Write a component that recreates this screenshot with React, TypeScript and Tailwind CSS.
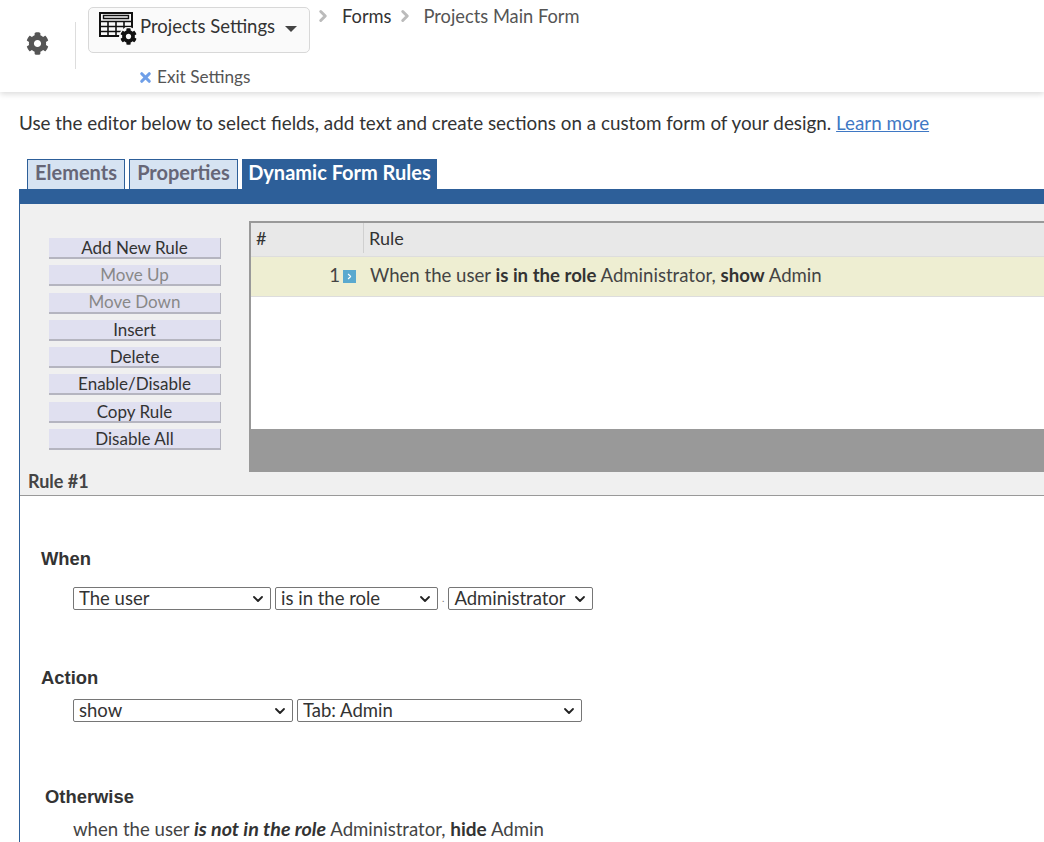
import { ChevronDown, ChevronRight, X } from "lucide-react";
import { FaCog } from "react-icons/fa";

const ruleButtons = [
  { label: "Add New Rule", disabled: false },
  { label: "Move Up", disabled: true },
  { label: "Move Down", disabled: true },
  { label: "Insert", disabled: false },
  { label: "Delete", disabled: false },
  { label: "Enable/Disable", disabled: false },
  { label: "Copy Rule", disabled: false },
  { label: "Disable All", disabled: false },
];

function Pick({ value, width }: { value: string; width: string }) {
  return (
    <div className={`relative h-[23px] ${width}`}>
      <select
        defaultValue={value}
        className="h-full w-full appearance-none rounded-[2px] border border-[#767676] bg-white pb-[2px] pl-[5px] text-[18.5px] leading-[20px] text-[#333]"
      >
        <option>{value}</option>
      </select>
      <ChevronDown
        size={16}
        stroke="#222"
        strokeWidth={2.750}
        className="pointer-events-none absolute right-[5px] top-[4px]"
      />
    </div>
  );
}

function TableGear() {
  return (
    <span className="relative block h-[36px] w-[38px] shrink-0">
      <svg width="34" height="28" viewBox="0 0 34 28">
        <path d="M1 2h32v23H1z" fill="none" stroke="#111" strokeWidth="2" />
        <path d="M4.500 4.500h25v3h-25z" fill="none" stroke="#111" strokeWidth="1.400" />
        <path
          d="M1 10.500h32M1 15.500h32M1 20.500h32M9 10v15M17 10v15M25 10v15"
          stroke="#111"
          strokeWidth="1.600"
          fill="none"
        />
      </svg>
      <span className="absolute left-[20px] top-[16px] rounded-full bg-[#fafafa] p-[1px]">
        <FaCog size={17} color="#111" />
      </span>
    </span>
  );
}

export default function App() {
  return (
    <div className="h-[842px] w-[1044px] overflow-hidden bg-white font-['Lato','Noto_Sans',sans-serif] text-[#333]">
      {/* top bar */}
      <div className="flex h-[92px] items-start bg-white shadow-[0_2px_6px_rgba(0,0,0,0.15)]">
        <div className="ml-[26px] mt-[32px] w-[24px]">
          <FaCog size={23} color="#555" />
        </div>
        <div className="ml-[25px] mt-[22px] h-[47px] w-px bg-[#ddd]" />
        <div className="ml-[12px] mt-[7px] flex flex-col">
          <button className="flex h-[46px] w-[222px] items-start rounded-[5px] border border-[#d8d8d8] bg-[#fafafa] pl-[10px] pt-[3px]">
            <TableGear />
            <span className="ml-[3px] mt-[3px] whitespace-nowrap text-[18.500px] leading-[24px] text-[#333]">Projects Settings</span>
            <span className="ml-[10px] mt-[15px] h-0 w-0 border-x-[6px] border-t-[6px] border-x-transparent border-t-[#444]" />
          </button>
          <div className="ml-[50px] mt-[12px] flex items-center gap-[4px] text-[17.2px] leading-[24px] text-[#555]">
            <X size={15} stroke="#6f9fe8" strokeWidth={5} />
            <span>Exit Settings</span>
          </div>
        </div>
        <div className="ml-[4px] mt-[4px] flex items-center text-[18.3px] leading-[24px]">
          <ChevronRight size={18} stroke="#bbb" strokeWidth={4} />
          <span className="ml-[10px] text-[#333]">Forms</span>
          <ChevronRight size={18} stroke="#bbb" strokeWidth={4} className="ml-[4px]" />
          <span className="ml-[10px] whitespace-nowrap text-[#555]">Projects Main Form</span>
        </div>
      </div>

      <p className="ml-[19px] mt-[19px] whitespace-nowrap text-[18.830px] leading-[24px] text-[#333]">
        Use the editor below to select fields, add text and create sections on a custom form of your design.{" "}
        <a className="text-[#3f78c4] underline">Learn more</a>
      </p>

      {/* tabs */}
      <div className="ml-[27px] mt-[24px] flex h-[30px] items-end gap-[4px] text-[20px] font-bold">
        <div className="flex h-[30px] w-[98px] items-center justify-center border border-b-0 border-[#2d5f99] bg-[#d6e3f2] pb-[5px] text-[#667]">Elements</div>
        <div className="flex h-[30px] w-[109px] items-center justify-center border border-b-0 border-[#2d5f99] bg-[#d6e3f2] pb-[5px] text-[#667]">Properties</div>
        <div className="flex h-[30px] w-[195px] items-center justify-center bg-[#2d5f99] pb-[4px] text-white">Dynamic Form Rules</div>
      </div>

      {/* editor */}
      <div className="ml-[19px] border-l border-[#2d5f99] pb-[30px]">
        <div className="h-[15px] bg-[#2d5f99]" />
        <div className="h-[292px] border-b border-[#999] bg-[#f0f0f0]">
          <div className="flex pt-[17px]">
            <div className="ml-[29px] mt-[17px] flex w-[172px] flex-col gap-[6.300px]">
              {ruleButtons.map((b) => (
                <div
                  key={b.label}
                  className={`flex h-[21px] items-center justify-center border-r border-b-2 border-[#b5b5c0] bg-[#e0e0f0] text-[17px] ${b.disabled ? "text-[#888]" : "text-[#333]"}`}
                >
                  {b.label}
                </div>
              ))}
            </div>
            <div className="ml-[28px] flex h-[251px] flex-1 flex-col border-2 border-r-0 border-[#999] bg-white">
              <div className="flex h-[33px] bg-[#e8e8e8] pb-[3px] text-[18px] leading-[30px]">
                <div className="w-[113px] border-r border-[#d0d0d0] pl-[5px]">#</div>
                <div className="pl-[5px]">Rule</div>
              </div>
              <div className="flex h-[41px] items-center border-y border-[#ddd] bg-[#eeeed2] pb-[2px] text-[18.6px]">
                <div className="flex w-[113px] items-center justify-end pr-[8px] text-[#444]">
                  1
                  <span className="ml-[3px] mt-[2px] flex h-[13px] w-[13px] items-center justify-center bg-[#5aa9cf]">
                    <ChevronRight size={9} stroke="white" strokeWidth={3} />
                  </span>
                </div>
                <div className="whitespace-nowrap pl-[6px] text-[#444]">
                  When the user <b className="text-[#333]">is in the role</b> Administrator, <b className="text-[#333]">show</b> Admin
                </div>
              </div>
              <div className="h-[132px] bg-white" />
              <div className="flex-1 bg-[#999]" />
            </div>
          </div>
          <div className="ml-[8px] mt-[-3px] text-[18px] font-bold leading-[24px] text-[#444]">Rule #1</div>
        </div>

        <div className="pl-[21px]">
          <h3 className="mt-[51px] font-['Liberation_Sans',sans-serif] text-[18.4px] font-bold leading-[24px] text-[#333]">When</h3>
          <div className="ml-[32px] mt-[16px] flex items-center gap-[4px]">
            <Pick value="The user" width="w-[198px]" />
            <Pick value="is in the role" width="w-[163px]" />
            <span className="text-[10px] text-[#777]">.</span>
            <Pick value="Administrator" width="w-[145px]" />
          </div>
          <h3 className="mt-[56px] font-['Liberation_Sans',sans-serif] text-[18.4px] font-bold leading-[24px] text-[#333]">Action</h3>
          <div className="ml-[32px] mt-[9px] flex items-center gap-[4px]">
            <Pick value="show" width="w-[220px]" />
            <Pick value="Tab: Admin" width="w-[285px]" />
          </div>
          <h3 className="ml-[4px] mt-[63px] font-['Liberation_Sans',sans-serif] text-[18.4px] font-bold leading-[24px] text-[#333]">Otherwise</h3>
          <p className="ml-[32px] mt-[8px] whitespace-nowrap text-[18.6px] leading-[24px] text-[#444]">
            when the user <b className="text-[19.700px] italic text-[#333]">is not in the role</b> Administrator, <b className="text-[19px] text-[#333]">hide</b> Admin
          </p>
        </div>
      </div>
    </div>
  );
}
